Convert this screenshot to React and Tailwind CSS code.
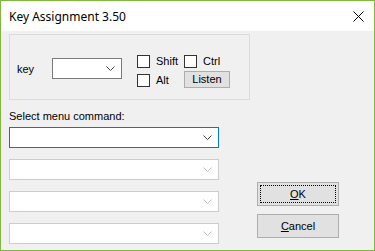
import React from "react";

function Chevron({ color = "#444" }) {
  return (
    <svg width="9" height="6" viewBox="0 0 9 6" className="shrink-0">
      <polyline points="0.5,0.5 4.5,4.5 8.5,0.5" fill="none" stroke={color} strokeWidth="1" />
    </svg>
  );
}

function Combo({ width, border, chevron }) {
  return (
    <div
      className={`flex h-[21px] items-center justify-end bg-white pr-[6px] border ${border}`}
      style={{ width }}
    >
      <Chevron color={chevron} />
    </div>
  );
}

function Check({ label }) {
  return (
    <div className="flex items-center gap-[6px]">
      <div className="h-[13px] w-[13px] border border-[#333333] bg-white"></div>
      <span>{label}</span>
    </div>
  );
}

export default function App() {
  return (
    <div
      className="flex h-[251px] w-[375px] flex-col border border-[#7eb93c] bg-[#f0f0f0] text-[11px] leading-[13px] text-black"
      style={{ fontFamily: '"Liberation Sans", Arial, sans-serif' }}
    >
      {/* Title bar */}
      <div className="flex h-[30px] items-center justify-between bg-white pl-[8px] pr-[10px]">
        <span className="text-[12px]" style={{ fontFamily: '"Noto Sans", sans-serif' }}>
          Key Assignment 3.50
        </span>
        <svg width="11" height="11" viewBox="0 0 11 11">
          <path d="M0.5 0.5 L10.5 10.5 M10.5 0.5 L0.5 10.5" stroke="#000" strokeWidth="1" />
        </svg>
      </div>

      {/* Key group */}
      <div className="ml-[8px] mt-[3px] flex h-[66px] w-[241px] items-start border border-[#dcdcdc]">
        <span className="ml-[7px] mt-[28px] w-[35px]">key</span>
        <div className="mt-[23px]">
          <Combo width={70} border="border-[#7a7a7a]" chevron="#444" />
        </div>
        <div className="ml-[15px] mt-[20px] grid grid-cols-[47px_auto] gap-y-[6px]">
          <Check label="Shift" />
          <Check label="Ctrl" />
          <div className="mt-[0px]">
            <Check label="Alt" />
          </div>
          <div className="mt-[-3px] flex h-[17px] w-[46px] items-center justify-center border border-[#adadad] bg-[#e1e1e1]">
            Listen
          </div>
        </div>
      </div>

      {/* Commands + buttons */}
      <div className="flex">
        <div className="ml-[8px] mt-[10px] flex flex-col">
          <span>Select menu command:</span>
          <div className="mt-[4px] flex flex-col gap-[11px]">
            <Combo width={210} border="border-[#0078d7]" chevron="#444" />
            <Combo width={210} border="border-[#cccccc]" chevron="#bfbfbf" />
            <Combo width={210} border="border-[#cccccc]" chevron="#bfbfbf" />
            <Combo width={210} border="border-[#cccccc]" chevron="#bfbfbf" />
          </div>
        </div>
        <div className="ml-[38px] mt-[82px] flex flex-col gap-[8px]">
          <div className="h-[24px] w-[82px] border border-[#adadad] bg-[#e1e1e1] p-[2px]">
            <div className="flex h-full w-full items-center justify-center border border-dotted border-black">
              <span><u>O</u>K</span>
            </div>
          </div>
          <div className="flex h-[24px] w-[82px] items-center justify-center border border-[#adadad] bg-[#e1e1e1]">
            <span><u>C</u>ancel</span>
          </div>
        </div>
      </div>
    </div>
  );
}
